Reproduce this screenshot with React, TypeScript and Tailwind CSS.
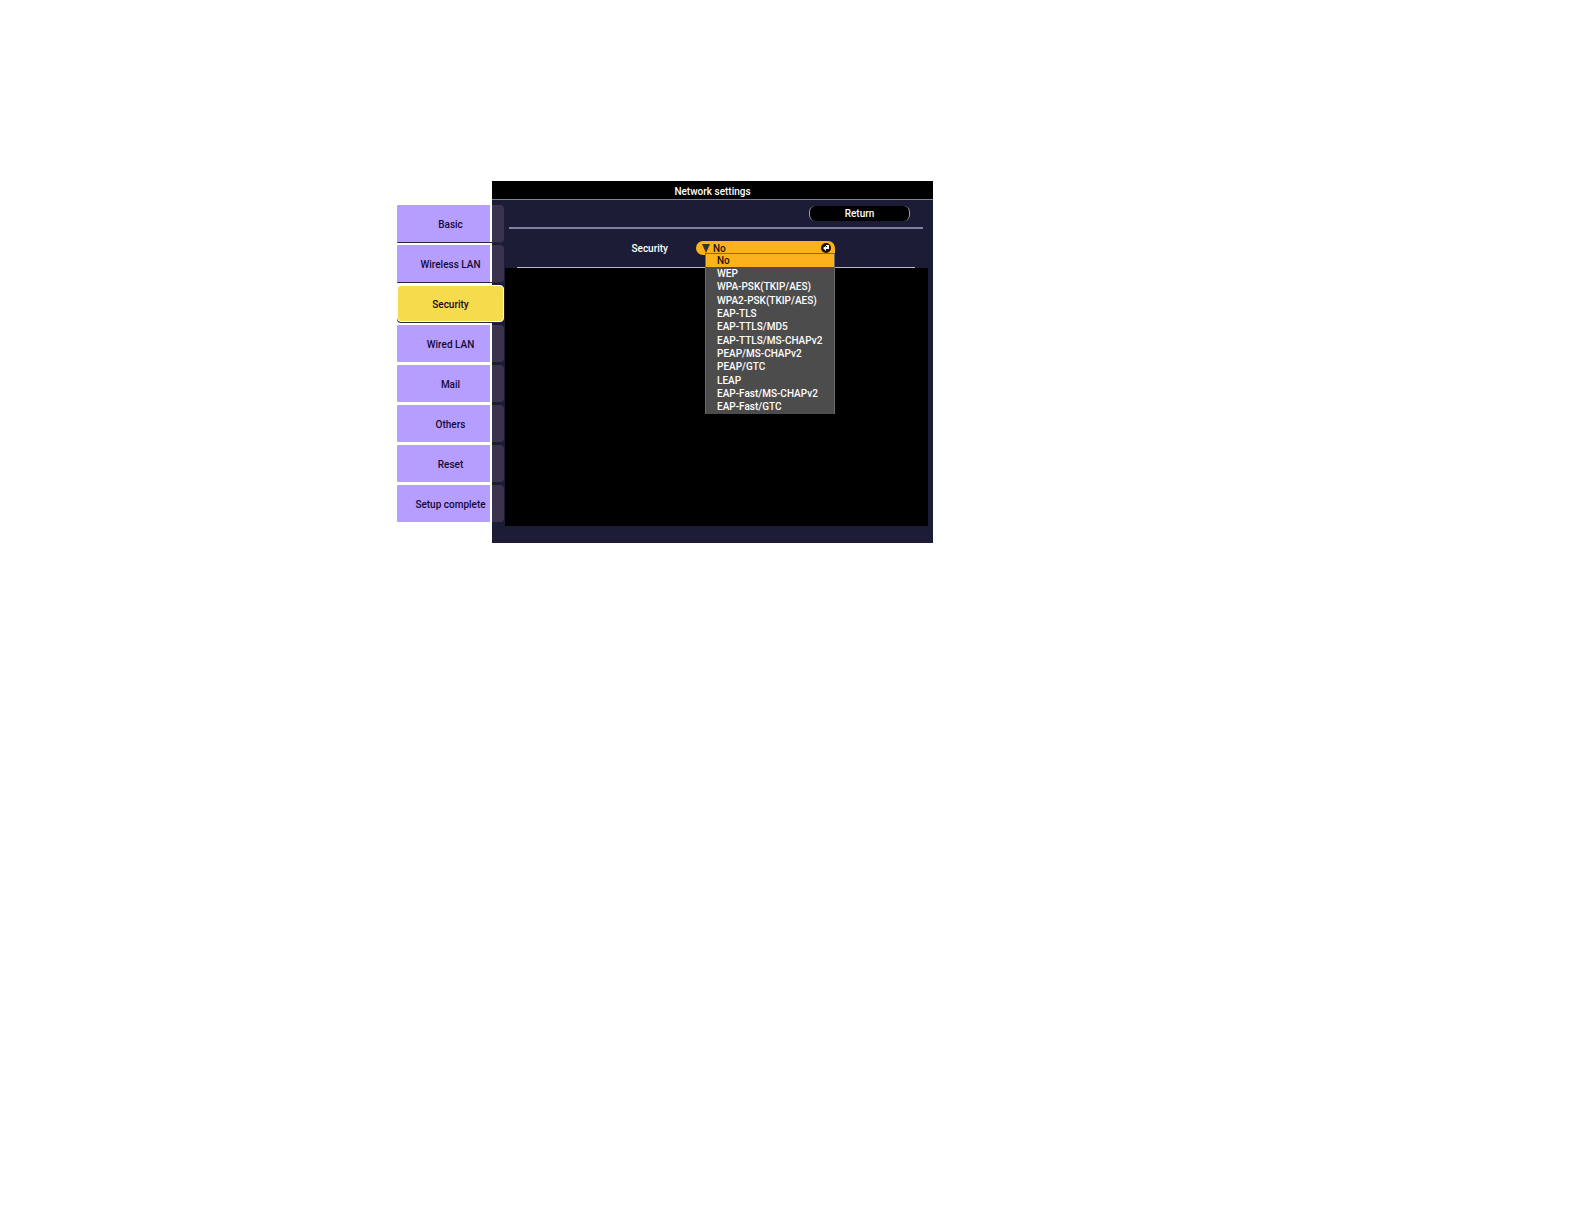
import clsx from "clsx";
import { useState } from "react";

const TABS = [
  "Basic",
  "Wireless LAN",
  "Security",
  "Wired LAN",
  "Mail",
  "Others",
  "Reset",
  "Setup complete",
];

const SECURITY_TYPES = [
  "No",
  "WEP",
  "WPA-PSK(TKIP/AES)",
  "WPA2-PSK(TKIP/AES)",
  "EAP-TLS",
  "EAP-TTLS/MD5",
  "EAP-TTLS/MS-CHAPv2",
  "PEAP/MS-CHAPv2",
  "PEAP/GTC",
  "LEAP",
  "EAP-Fast/MS-CHAPv2",
  "EAP-Fast/GTC",
];

export default function App() {
  const [tab, setTab] = useState("Security");
  return (
    <main className="min-h-screen bg-white pt-[181px] font-['Roboto',sans-serif] text-[10px] leading-3 font-medium">
      <div className="ml-[25%] flex max-w-[537px] items-start pl-px">
        <TabList active={tab} onSelect={setTab} />
        <section className="min-w-0 flex-1 bg-[#1c1c37] pb-[17px]">
          <h1 className="h-[19px] border-b border-[#85858f] bg-black pt-[5px] text-center font-medium text-white">
            Network settings
          </h1>
          <div className="mr-[10px] ml-[17px] flex h-[29px] justify-end border-b-2 border-[#82829f] pt-[6px] pr-[13px]">
            <button className="h-[15px] w-[101px] rounded-md border-x border-[#9a9aae] bg-black text-white">
              Return
            </button>
          </div>
          <SecurityField />
          <div className="mr-[5px] ml-[13px] h-[258px] bg-black" />
        </section>
      </div>
    </main>
  );
}

function TabList({
  active,
  onSelect,
}: {
  active: string;
  onSelect: (tab: string) => void;
}) {
  return (
    <nav className="z-10 mt-6 -mr-3 flex w-[107px] shrink-0 flex-col gap-[3px]">
      {TABS.map((tab, i) => (
        <button
          key={tab}
          onClick={() => onSelect(tab)}
          className={clsx(
            "h-[37px] pt-[2px] text-center text-[#160a35]",
            tab === active
              ? "rounded-sm border border-white bg-[#f6db4c]"
              : "rounded-[1px] rounded-r-sm bg-[linear-gradient(to_right,#b59eff_93px,#fff_93px,#fff_95px,#3b334e_95px)]",
            i < 3 && "shadow-[0_1px_0_#2b2540]",
          )}
        >
          {tab}
        </button>
      ))}
    </nav>
  );
}

function SecurityField() {
  const [value, setValue] = useState("No");
  return (
    <div className="mr-[18px] ml-[25px] flex h-[39px] items-start border-b border-[#b9b9cc] pt-3">
      <label
        htmlFor="security"
        className="w-[179px] shrink-0 pt-[2px] pr-7 text-right text-white"
      >
        Security
      </label>
      <div className="relative h-[14px] w-[139px]">
        <select
          id="security"
          value={value}
          onChange={(e) => setValue(e.target.value)}
          className="block h-[14px] w-full appearance-none rounded-l-full rounded-tr-full bg-[#fcb21a] pt-px pl-[17px] leading-3 text-[#1c1408]"
        >
          {SECURITY_TYPES.map((type) => (
            <option key={type}>{type}</option>
          ))}
        </select>
        <svg
          viewBox="0 0 8 9"
          className="pointer-events-none absolute top-[3px] left-[6px] h-[9px] w-2"
        >
          <path d="M0 0h8L4 9z" fill="#3d3428" />
        </svg>
        <EnterIcon className="pointer-events-none absolute top-[2px] right-1 h-[10px] w-[10px]" />
        <ul
          role="listbox"
          className="absolute top-[12px] left-[9px] z-10 grid h-[161px] w-[130px] grid-rows-12 border border-b-0 border-[#6b6b6b] bg-[#4c4c4c] text-white"
        >
          {SECURITY_TYPES.map((type) => (
            <li
              key={type}
              role="option"
              aria-selected={type === value}
              onClick={() => setValue(type)}
              className={clsx(
                "flex cursor-pointer items-center pl-[11px]",
                type === value && "bg-[#fcb21a] text-[#1c1408]",
              )}
            >
              {type}
            </li>
          ))}
        </ul>
      </div>
    </div>
  );
}

function EnterIcon({ className }: { className?: string }) {
  return (
    <svg viewBox="0 0 10 10" className={className}>
      <circle cx="5" cy="5" r="5" fill="#1a1208" />
      <path d="M5 2h3v4H5v2L2 5l3-2v1h1V3H5z" fill="#fff" />
    </svg>
  );
}
